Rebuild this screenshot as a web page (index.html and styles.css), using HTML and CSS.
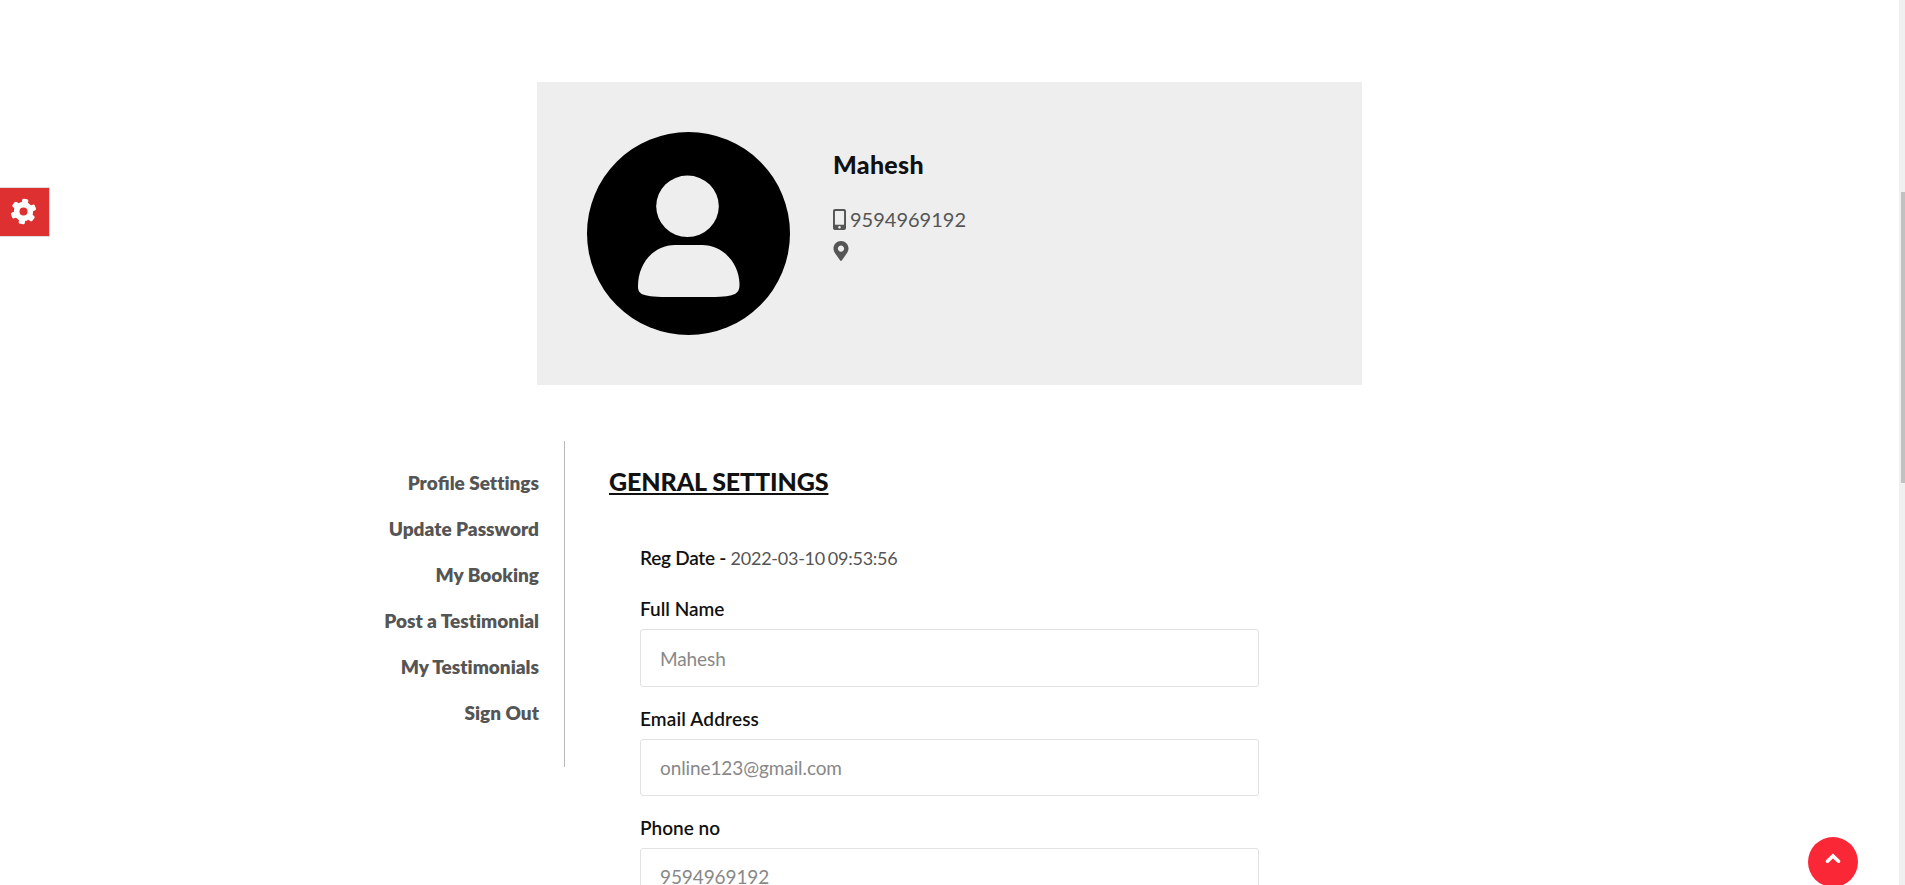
FILE: index.html
```html
<!DOCTYPE html>
<html lang="en">
<head>
<meta charset="utf-8">
<title>Profile Settings</title>
<link rel="stylesheet" href="styles.css">
</head>
<body>
<main class="page">
  <section class="card">
    <svg class="avatar" viewBox="0 0 203 203">
      <circle cx="101.5" cy="101.5" r="101.5" fill="#000"/>
      <ellipse cx="100.5" cy="74.3" rx="31.3" ry="30.700" fill="#eee"/>
      <path d="M88 113h27C136 113 152 131 152.500 152C152.500 161 150 165 124 165H79C53 165 51 161 51 154C51 131 67 113 88 113Z" fill="#eee"/>
    </svg>
    <div class="info">
      <h1 class="name">Mahesh</h1>
      <p class="line"><svg class="mobile" width="13" height="21" viewBox="0 0 320 512"><path fill="#555" d="M272 0H48C21.500 0 0 21.500 0 48v416c0 26.500 21.500 48 48 48h224c26.500 0 48-21.500 48-48V48c0-26.500-21.500-48-48-48zM160 480c-17.700 0-32-14.300-32-32s14.300-32 32-32 32 14.300 32 32-14.300 32-32 32zm112-108c0 6.600-5.400 12-12 12H60c-6.600 0-12-5.400-12-12V60c0-6.600 5.400-12 12-12h200c6.600 0 12 5.400 12 12v312z"/></svg><span>9594969192</span></p>
      <p class="line"><svg width="16" height="20" viewBox="0 0 384 512"><path fill="#555" d="M172.268 501.670C26.970 291.031 0 269.413 0 192 0 85.961 85.961 0 192 0s192 85.961 192 192c0 77.413-26.970 99.031-172.268 309.670-9.535 13.774-29.930 13.773-39.464 0zM192 272c44.183 0 80-35.817 80-80s-35.817-80-80-80-80 35.817-80 80 35.817 80 80 80z"/></svg></p>
    </div>
  </section>
  <div class="columns">
    <nav class="menu">
      <a>Pro<span class="lig">fi</span>le Settings</a>
      <a>Update Password</a>
      <a>My Booking</a>
      <a>Post a Testimonial</a>
      <a>My Testimonials</a>
      <a>Sign Out</a>
    </nav>
    <section class="settings">
      <h2 class="title">GENRAL SETTINGS</h2>
      <form class="form">
        <p class="reg"><b>Reg Date - </b><span class="date">2022-03-10 09:53:56</span></p>
        <label class="label">Full Name</label>
        <div class="field tall">Mahesh</div>
        <label class="label email">Email Address</label>
        <div class="field">online123@gmail.com</div>
        <label class="label">Phone no</label>
        <div class="field">9594969192</div>
      </form>
    </section>
  </div>
</main>
<div class="gear"><svg width="27" height="27" viewBox="0 0 27 27"><g fill="#fff" transform="rotate(9 13.500 13.500)"><circle cx="13.500" cy="13.500" r="9.700"/><rect x="10.400" y=".8" width="6.200" height="25.400" rx="1.600"/><rect x="10.400" y=".8" width="6.200" height="25.400" rx="1.600" transform="rotate(60 13.500 13.500)"/><rect x="10.400" y=".8" width="6.200" height="25.400" rx="1.600" transform="rotate(120 13.500 13.500)"/></g><circle cx="13.500" cy="13.500" r="4" fill="#de3030"/></svg></div>
<div class="top"><svg width="16" height="11" viewBox="0 0 16 11"><path d="M2.500 8.200L8 3l5.500 5.200" fill="none" stroke="#fff" stroke-width="3.600" stroke-linecap="round" stroke-linejoin="miter"/></svg></div>
<div class="track"><div class="thumb"></div></div>
</body>
</html>
```

FILE: styles.css
```css
* { box-sizing: border-box; }
body {
  margin: 0;
  height: 885px;
  overflow: hidden;
  background: #fff;
  color: #555;
  font-family: Lato, "Open Sans", sans-serif;
  font-size: 18px;
}
h1, h2, p { margin: 0; }
.page { height: 885px; overflow: hidden; padding-top: 82px; }
.card {
  display: flex;
  gap: 43px;
  width: 825px;
  height: 303px;
  margin-left: 537px;
  padding: 50px;
  background: #eee;
}
.avatar { flex: none; width: 203px; height: 203px; }
.info { padding-top: 16px; }
.name { color: #111; font-size: 25px; line-height: 32px; font-weight: 900; letter-spacing: .3px; margin-bottom: 23px; }
.line { display: flex; align-items: center; gap: 4px; height: 32px; font-size: 20px; }
.columns { display: flex; margin-top: 56px; }
.menu {
  display: flex;
  flex-direction: column;
  flex: none;
  width: 565px;
  height: 326px;
  padding: 19px 25px 0 0;
  border-right: 1px solid #b8b8b8;
  text-align: right;
  font-size: 19px;
  font-weight: 800;
  font-variant-ligatures: none;
}
.lig { font-variant-ligatures: normal; }
.menu a { height: 46px; line-height: 46px; }
.settings { padding: 23px 0 0 44px; }
.title { color: #111; font-size: 25px; line-height: 34px; font-weight: 900; letter-spacing: -.1px; text-decoration: underline; }
.form { width: 619px; margin-left: 31px; padding-top: 44px; }
.reg { height: 32px; line-height: 32px; margin-bottom: 20px; }
.reg b { color: #111; font-weight: 600; font-size: 19px; letter-spacing: -.25px; }
.date { letter-spacing: -.25px; word-spacing: -1.5px; }
.label { display: block; color: #111; font-size: 19px; font-weight: 600; line-height: 30px; padding-bottom: 5px; }
.email { letter-spacing: .15px; }
.field {
  height: 57px;
  margin-bottom: 17px;
  padding: 0 19px;
  border: 1px solid #e2e2e2;
  border-radius: 3px;
  line-height: 55px;
  color: #888;
  font-size: 19px;
  letter-spacing: -.1px;
}
.tall { height: 58px; line-height: 58px; }
.gear {
  position: absolute;
  left: 0;
  top: 187px;
  width: 50px;
  height: 50px;
  padding: 10px 0 0 10px;
  background: #de3030;
  border: 1px solid #ddd;
  border-left: 0;
}
.top {
  position: absolute;
  left: 1808px;
  top: 837px;
  width: 50px;
  height: 50px;
  padding: 16px 17px;
  border-radius: 50%;
  background: #fa2837;
  line-height: 0;
}
.track { position: absolute; right: 0; top: 0; width: 6px; height: 885px; background: #f0f0f0; padding: 192px 0 0 2px; }
.thumb { height: 291px; background: #c1c1c1; }
```
